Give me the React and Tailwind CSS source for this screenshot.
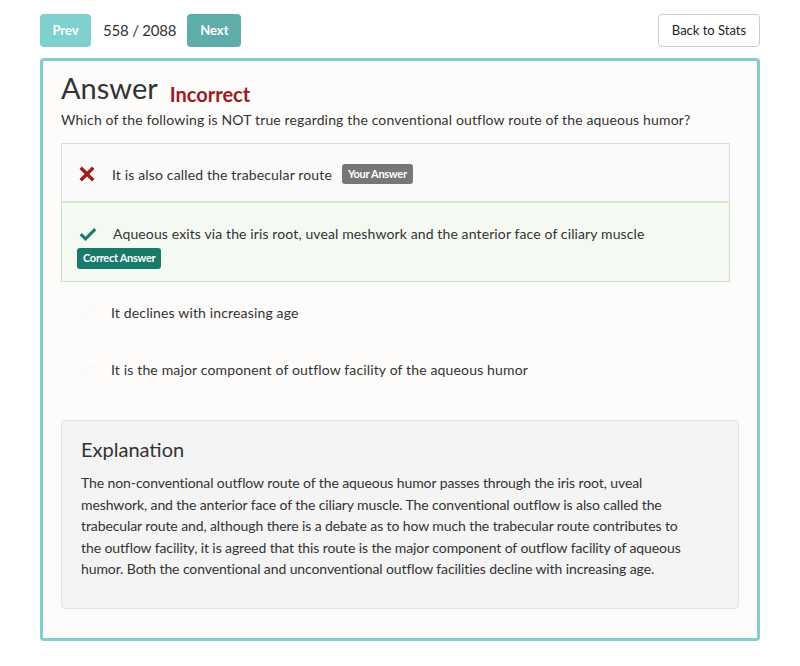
import React from 'react'

const Check = ({ className }) => (
  <svg viewBox="0 0 24 24" className={className} fill="currentColor">
    <path d="M9 15.2 4.6 10.8 2 13.4 9 20.4 22 7.4 19.4 4.8z" />
  </svg>
)

const Cross = ({ className }) => (
  <svg viewBox="0 0 24 24" className={className} fill="currentColor">
    <path d="M5.2 2 12 8.8 18.8 2 22 5.2 15.2 12 22 18.8 18.8 22 12 15.2 5.2 22 2 18.8 8.8 12 2 5.2z" />
  </svg>
)

const options = [
  { text: 'It is also called the trabecular route', state: 'wrong' },
  { text: 'Aqueous exits via the iris root, uveal meshwork and the anterior face of ciliary muscle', state: 'correct' },
  { text: 'It declines with increasing age', state: 'none' },
  { text: 'It is the major component of outflow facility of the aqueous humor', state: 'none' },
]

const explanation = [
  'The non-conventional outflow route of the aqueous humor passes through the iris root, uveal',
  'meshwork, and the anterior face of the ciliary muscle. The conventional outflow is also called the',
  'trabecular route and, although there is a debate as to how much the trabecular route contributes to',
  'the outflow facility, it is agreed that this route is the major component of outflow facility of aqueous',
  'humor. Both the conventional and unconventional outflow facilities decline with increasing age.',
]

export default function App() {
  return (
    <div className="min-h-[666px] bg-white text-[#333] font-['Lato','Open_Sans',sans-serif]">
      <div className="px-10 pt-[14px]">
        {/* Top bar */}
        <div className="flex items-center justify-between">
          <div className="flex items-center">
            <button className="h-[33px] w-[51px] rounded bg-[#80d0cd] text-[13px] font-bold text-white">
              Prev
            </button>
            <span className="ml-3 text-[15px] tracking-[-0.2px] text-[#333]">558 / 2088</span>
            <button className="ml-[11px] h-[33px] w-[54px] rounded bg-[#5eadaa] text-[13px] font-bold text-white">
              Next
            </button>
          </div>
          <button className="h-[33px] w-[102px] rounded border border-[#cccccc] bg-white text-[13px] text-[#222]">
            Back to Stats
          </button>
        </div>

        {/* Card */}
        <div className="mt-[11px] h-[583px] rounded border-[3px] border-[#7ecfcd] bg-[#fdfcfb] px-[18px] pt-[10px]">
          <div className="flex items-end">
            <h1 className="text-[29px] leading-[34px] text-[#333]">Answer</h1>
            <span className="mb-[-4px] ml-[12px] text-[20px] font-bold text-[#9b1b1c]">Incorrect</span>
          </div>
          <p className="mt-[5px] text-[14px] leading-[20px] tracking-[0.15px]">
            Which of the following is NOT true regarding the conventional outflow route of the aqueous humor?
          </p>

          {/* Options */}
          <div className="mt-[13px] w-[669px]">
            {options.map((o, i) => {
              if (o.state === 'wrong') {
                return (
                  <div key={i} className="flex h-[59px] items-center border border-[#dddddd] bg-[#fafafa] pl-[16px] pt-[3px]">
                    <Cross className="h-[18px] w-[18px] text-[#a01d1d]" />
                    <span className="ml-[16px] text-[14px] tracking-[0.15px]">{o.text}</span>
                    <span className="ml-[10px] rounded-[3px] bg-[#777777] px-[6px] py-[2px] text-[11px] font-bold tracking-[-0.3px] text-white">
                      Your Answer
                    </span>
                  </div>
                )
              }
              if (o.state === 'correct') {
                return (
                  <div key={i} className="h-[80px] border border-[#c8e2c4] border-t-[#d8ebd4] bg-[#f4faf2] pl-[15px] pt-[20px]">
                    <div className="flex items-center">
                      <Check className="h-[20px] w-[22px] text-[#177a6b]" />
                      <span className="ml-[14px] text-[14px] tracking-[0.12px]">{o.text}</span>
                    </div>
                    <span className="inline-block rounded-[3px] bg-[#177a6b] px-[6px] py-[2px] text-[11px] font-bold tracking-[-0.3px] text-white">
                      Correct Answer
                    </span>
                  </div>
                )
              }
              return (
                <div key={i} className="flex h-[57px] items-center pl-[16px] pt-[3px]">
                  <Check className="h-[20px] w-[22px] text-[#faf9f8]" />
                  <span className="ml-[12px] text-[14px] tracking-[0.15px]">{o.text}</span>
                </div>
              )
            })}
          </div>

          {/* Explanation */}
          <div className="mt-[24px] h-[189px] w-[678px] rounded border border-[#e3e3e3] bg-[#f4f4f4] px-[19px] pt-[16px]">
            <h2 className="text-[20px] leading-[24px] text-[#333]">Explanation</h2>
            <p className="mt-[11px] text-[14px] leading-[21.5px] tracking-[-0.1px]">
              {explanation.map((line, i) => (
                <span key={i} className="block whitespace-nowrap">{line}</span>
              ))}
            </p>
          </div>
        </div>
      </div>
    </div>
  )
}
